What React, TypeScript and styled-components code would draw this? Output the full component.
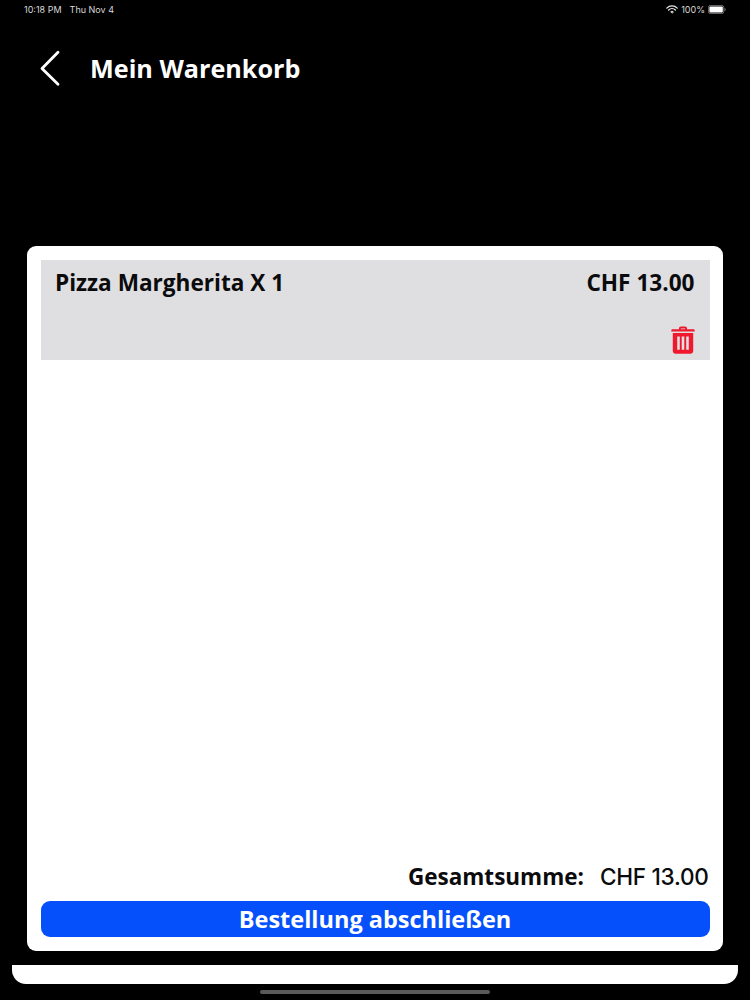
import { createGlobalStyle } from "styled-components";
import styled from "styled-components";

const GlobalStyle = createGlobalStyle`
  html, body {
    margin: 0;
    padding: 0;
    background: #000;
  }
`;

const Screen = styled.div`
  width: 750px;
  height: 1000px;
  background: #000;
  display: flex;
  flex-direction: column;
  overflow: hidden;
  font-family: "Open Sans", sans-serif;
`;

const StatusBar = styled.div`
  height: 18px;
  padding: 0 24px 0 24px;
  display: flex;
  align-items: center;
  justify-content: space-between;
  font-family: "Inter", sans-serif;
  font-size: 9px;
  color: #d8d8d8;
`;

const StatusGroup = styled.div`
  display: flex;
  align-items: center;
  gap: ${(p: { $gap: number }) => p.$gap}px;
`;

const Header = styled.div`
  height: 100px;
  padding: 0 0 0 40px;
  display: flex;
  align-items: center;
  gap: 29px;
`;

const Title = styled.h1`
  margin: 0;
  font-size: 25.2px;
  font-weight: 700;
  color: #fff;
`;

const Card = styled.div`
  margin: 128px 27px 0;
  height: 705px;
  box-sizing: border-box;
  padding: 14px 13.5px;
  background: #fff;
  border-radius: 9px;
  display: flex;
  flex-direction: column;
`;

const ItemRow = styled.div`
  height: 100px;
  box-sizing: border-box;
  padding: 7px 15px 6px 14.5px;
  background: #dfdee0;
  display: flex;
  flex-direction: column;
  justify-content: space-between;
`;

const ItemLine = styled.div`
  display: flex;
  justify-content: space-between;
  font-size: 22.6px;
  font-weight: 700;
  color: #0b0b0d;
`;

const TrashWrap = styled.div`
  display: flex;
  justify-content: flex-end;
`;

const Total = styled.div`
  margin-top: auto;
  padding-right: 1px;
  display: flex;
  justify-content: flex-end;
  align-items: baseline;
  gap: 16px;
  color: #0b0b0d;
`;

const TotalLabel = styled.span`
  font-size: 22.5px;
  font-weight: 700;
`;

const TotalValue = styled.span`
  font-family: "Inter", sans-serif;
  font-size: 22.6px;
  font-weight: 500;
  letter-spacing: -0.3px;
`;

const CheckoutButton = styled.button`
  margin-top: 9px;
  height: 36px;
  padding: 0;
  border: 0;
  border-radius: 9px;
  background: #0550fb;
  color: #fff;
  font-family: "Open Sans", sans-serif;
  font-size: 23.5px;
  font-weight: 700;
`;

const BottomStrip = styled.div`
  margin: 14px 12px 0;
  height: 19px;
  background: #fff;
  border-radius: 0 0 14px 14px;
`;

const HomeIndicator = styled.div`
  margin: 6px auto 0;
  width: 230px;
  height: 4px;
  border-radius: 2px;
  background: #5a5a5c;
`;

function Wifi() {
  return (
    <svg width="12" height="9" viewBox="0 0 12 9" fill="none" stroke="#e6e6e6" strokeLinecap="round">
      <path d="M.8 3.1a7.4 7.4 0 0 1 10.4 0" strokeWidth="1.3" />
      <path d="M2.6 5a4.9 4.9 0 0 1 6.8 0" strokeWidth="1.3" />
      <path d="M6 8.2 4.5 6.7a2.2 2.2 0 0 1 3 0Z" fill="#e6e6e6" strokeWidth=".4" />
    </svg>
  );
}

function Battery() {
  return (
    <svg width="18" height="9" viewBox="0 0 18 9">
      <rect x=".4" y=".4" width="15.4" height="8.2" rx="2" fill="none" stroke="#8a8a8a" strokeWidth=".8" />
      <rect x="1.4" y="1.4" width="13.4" height="6.2" rx="1" fill="#fff" />
      <path d="M16.6 3v3c.7-.2 1-.8 1-1.5s-.3-1.300-1-1.500Z" fill="#8a8a8a" />
    </svg>
  );
}

function BackChevron() {
  return (
    <svg width="21" height="37" viewBox="0 0 21 37" fill="none" stroke="#fff" strokeWidth="2.8" strokeLinecap="round" strokeLinejoin="round">
      <path d="M18 2.300 2 18.500l16 15.700" />
    </svg>
  );
}

function Trash() {
  return (
    <svg width="24" height="28" viewBox="0 0 24 28" fill="#f0182c">
      <path d="M8 3.200V2.400C8 1.300 8.900.6 10 .6h4c1.100 0 2 .7 2 1.800v.8h6.400c.8 0 1.300.6 1.300 1.300v.9H.3v-.9c0-.7.5-1.300 1.300-1.300H8Zm1.800 0h4.400v-.8h-4.400v.8Z" />
      <path
        fillRule="evenodd"
        d="M1.800 7h20.400v18c0 1.600-1.200 2.800-2.800 2.800H4.600c-1.600 0-2.800-1.200-2.800-2.800V7Zm4.400 3.400v13.400h2.600V10.400H6.200Zm4.500 0v13.400h2.600V10.400h-2.600Zm4.500 0v13.400h2.600V10.400h-2.600Z"
      />
    </svg>
  );
}

export default function App() {
  return (
    <Screen>
      <GlobalStyle />
      <StatusBar>
        <StatusGroup $gap={8}>
          <span>10:18 PM</span>
          <span>Thu Nov 4</span>
        </StatusGroup>
        <StatusGroup $gap={3}>
          <Wifi />
          <span>100%</span>
          <Battery />
        </StatusGroup>
      </StatusBar>
      <Header>
        <BackChevron />
        <Title>Mein Warenkorb</Title>
      </Header>
      <Card>
        <ItemRow>
          <ItemLine>
            <span>Pizza Margherita X 1</span>
            <span>CHF 13.00</span>
          </ItemLine>
          <TrashWrap>
            <Trash />
          </TrashWrap>
        </ItemRow>
        <Total>
          <TotalLabel>Gesamtsumme:</TotalLabel>
          <TotalValue>CHF 13.00</TotalValue>
        </Total>
        <CheckoutButton>Bestellung abschließen</CheckoutButton>
      </Card>
      <BottomStrip />
      <HomeIndicator />
    </Screen>
  );
}
